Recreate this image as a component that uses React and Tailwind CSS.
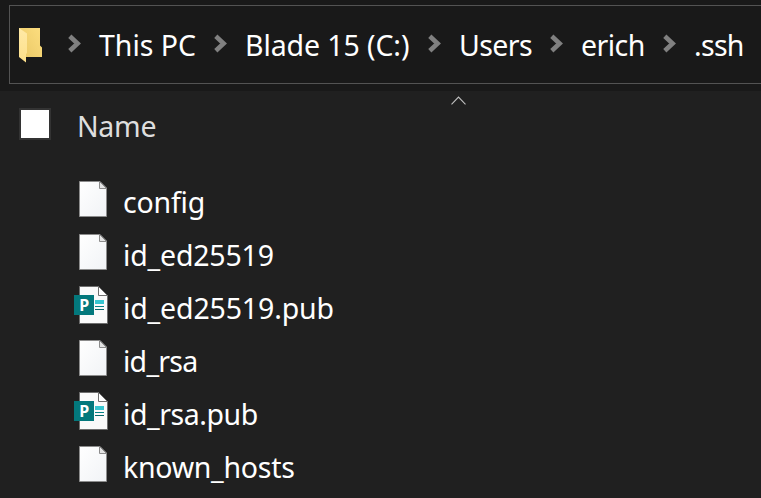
import React from "react";

const crumbs = [
  { label: "This PC", step: "w-[146px]", fit: "" },
  { label: "Blade 15 (C:)", step: "w-[214px]", fit: "tracking-[-0.1px]" },
  { label: "Users", step: "w-[122px]", fit: "tracking-[-0.6px]" },
  { label: "erich", step: "w-[113px]", fit: "tracking-[-0.55px]" },
  { label: ".ssh", step: "w-[98px]", fit: "tracking-[-0.7px]" },
];

const files = [
  { name: "config", kind: "blank", fit: "tracking-[-0.2px]" },
  { name: "id_ed25519", kind: "blank", fit: "tracking-[-0.18px]" },
  { name: "id_ed25519.pub", kind: "publisher", fit: "tracking-[-0.15px]" },
  { name: "id_rsa", kind: "blank", fit: "tracking-[-0.75px]" },
  { name: "id_rsa.pub", kind: "publisher", fit: "tracking-[-0.45px]" },
  { name: "known_hosts", kind: "blank", fit: "tracking-[-0.28px]" },
];

function FolderIcon() {
  return (
    <svg className="block" width="23" height="35" viewBox="0 0 23 35">
      <defs>
        <linearGradient id="back" x1="0" y1="1" x2="1" y2="0.2">
          <stop offset="0" stopColor="#e9c765" />
          <stop offset="1" stopColor="#fbdc7d" />
        </linearGradient>
        <linearGradient id="flap" x1="0" y1="0" x2="0" y2="1">
          <stop offset="0" stopColor="#ffe9a6" />
          <stop offset="1" stopColor="#fde08a" />
        </linearGradient>
      </defs>
      <path d="M0 0H21V17.5L23 19.5V29H0Z" fill="url(#back)" />
      <path d="M0 0L8 5.5V25L7 26V34.5L0 29Z" fill="url(#flap)" />
    </svg>
  );
}

function Chevron() {
  return (
    <svg className="block shrink-0" width="13" height="19" viewBox="0 0 13 19">
      <path d="M1.8 2.2L9.6 9.5L1.8 16.8" fill="none" stroke="#808080" strokeWidth="4.6" />
    </svg>
  );
}

function BlankIcon() {
  return (
    <svg className="block" width="34" height="38" viewBox="0 0 34 38">
      <defs>
        <linearGradient id="sheet" x1="0" y1="0" x2="1" y2="1">
          <stop offset="0" stopColor="#ffffff" />
          <stop offset="1" stopColor="#f1f3f6" />
        </linearGradient>
      </defs>
      <path d="M5.5 1.5H26L32.5 8V36.5H5.5Z" fill="url(#sheet)" stroke="#8c8c8c" />
      <path d="M25.5 1.5V8.5H32.5Z" fill="#e4e4e4" stroke="#8c8c8c" />
    </svg>
  );
}

function PublisherIcon() {
  return (
    <svg className="block" width="34" height="38" viewBox="0 0 34 38">
      <path d="M5.5 0.5H24.5L33.5 9.5V37.5H5.5Z" fill="#fafafa" stroke="#6e6e6e" />
      <path d="M24.5 0.5V9.5H33.5Z" fill="#ffffff" stroke="#6e6e6e" />
      <path d="M21 14H30V18H21Z" fill="#37c6d0" />
      <path d="M21 20H30V21H21Z" fill="#038387" />
      <path d="M21 23H30V24H21Z" fill="#04686b" />
      <path d="M0 9H20V29H0Z" fill="#03787c" />
      <text x="10.2" y="24.5" textAnchor="middle" fill="#fff" fontSize="16" fontWeight="700" fontFamily="'Noto Sans', sans-serif">
        P
      </text>
    </svg>
  );
}

export default function App() {
  return (
    <div className="flex h-[498px] w-[761px] flex-col overflow-hidden bg-[#202020] font-['Noto_Sans',sans-serif] text-[28.5px] text-white">
      <header className="h-[91px] shrink-0 bg-[#191919] pt-[5px] pl-[9px]">
        <nav className="flex h-[79px] border border-r-0 border-[#535353] pl-[9px]">
          <div className="w-[49px] shrink-0 pt-[22px]">
            <FolderIcon />
          </div>
          {crumbs.map((c) => (
            <div key={c.label} className={`flex shrink-0 pt-[28px] ${c.step}`}>
              <Chevron />
              <span className={`-mt-[8px] ml-[18px] leading-[38px] whitespace-nowrap ${c.fit}`}>{c.label}</span>
            </div>
          ))}
        </nav>
      </header>
      <div className="flex h-[82px] shrink-0 items-start">
        <div className="mt-[17px] ml-[19px] h-[32px] w-[32px] shrink-0 border-2 border-[#333333] bg-white" />
        <span className="mt-[16px] ml-[26px] w-[373px] leading-[38px] tracking-[-0.3px] text-[#dedede]">Name</span>
        <svg className="mt-[4px] block" width="18" height="11" viewBox="0 0 18 11">
          <path d="M1.5 9.3L8.5 2L15.5 9.3" fill="none" stroke="#c0c0c0" strokeWidth="1.1" />
        </svg>
      </div>
      <ul>
        {files.map((f) => (
          <li key={f.name} className="flex h-[53px] items-start pl-[74px]">
            <div className="mt-[7px] w-[49px] shrink-0">{f.kind === "blank" ? <BlankIcon /> : <PublisherIcon />}</div>
            <span className={`leading-[58px] whitespace-nowrap ${f.fit}`}>{f.name}</span>
          </li>
        ))}
      </ul>
    </div>
  );
}
